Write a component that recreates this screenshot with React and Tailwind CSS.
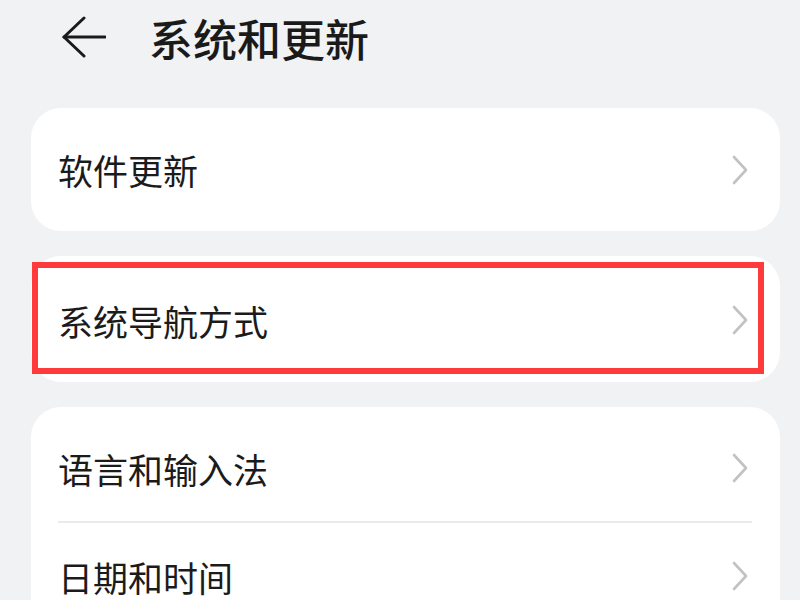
const font = { fontFamily: '"Noto Sans CJK SC", "Noto Sans", sans-serif' };

function Chevron() {
  return (
    <svg width="18" height="30" viewBox="0 0 18 30" fill="none" className="shrink-0">
      <path d="M3 2 L15 15 L3 28" stroke="#c2c2c2" strokeWidth="2.6" strokeLinecap="round" strokeLinejoin="round" />
    </svg>
  );
}

function Row({ label, height = 'h-[123px]' }) {
  return (
    <div className={`flex items-center justify-between pl-[27px] pr-[31px] ${height}`}>
      <span className="text-[35px] leading-none text-[#1b1b1b]">{label}</span>
      <Chevron />
    </div>
  );
}

export default function App() {
  return (
    <div className="h-[600px] w-[800px] overflow-hidden bg-[#f1f2f4]" style={font}>
      <header className="flex h-[76px] items-center pl-[62px]">
        <svg width="44" height="42" viewBox="0 0 44 42" fill="none" className="-mt-[3px]">
          <path d="M2 21 H43" stroke="#1a1a1a" strokeWidth="3" strokeLinecap="round" />
          <path d="M22 2 L2 21 L22 40" stroke="#1a1a1a" strokeWidth="3" strokeLinecap="round" strokeLinejoin="round" />
        </svg>
        <h1 className="ml-[43px] text-[44px] font-medium leading-none text-[#1a1a1a]">系统和更新</h1>
      </header>

      <div className="ml-[31px] mt-[32px] flex w-[749px] flex-col gap-[25px]">
        <div className="rounded-[30px] bg-white">
          <Row label="软件更新" />
        </div>

        <div className="relative rounded-[30px] bg-white">
          <div className="pt-[2px]">
            <Row label="系统导航方式" height="h-[124px]" />
          </div>
          <div className="absolute left-[1px] right-[16px] top-[6px] bottom-[8px] border-[6px] border-[#fe3a3a]" />
        </div>

        <div className="rounded-[30px] bg-white">
          <Row label="语言和输入法" height="h-[114px] pt-[8px]" />
          <div className="ml-[27px] mr-[28px] h-[2px] bg-[#ebebeb]" />
          <Row label="日期和时间" height="h-[106px]" />
        </div>
      </div>
    </div>
  );
}
